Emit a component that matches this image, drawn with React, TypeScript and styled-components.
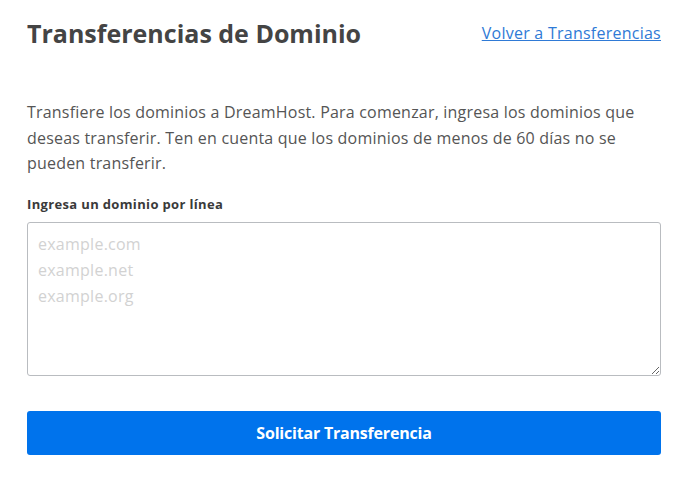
import React from "react";
import styled, { createGlobalStyle } from "styled-components";

const Global = createGlobalStyle`
  html, body { margin: 0; padding: 0; background: #fff; }
  body { font-family: "Open Sans", "Liberation Sans", sans-serif; }
  * { box-sizing: border-box; }
`;

const Page = styled.div`
  padding: 15px 22px 0 27px;
  display: flex;
  flex-direction: column;
`;

const Header = styled.div`
  display: flex;
  justify-content: space-between;
  align-items: center;
  height: 36px;
`;

const Title = styled.h1`
  margin: 0;
  font-family: "Open Sans", "Noto Sans", sans-serif;
  font-weight: 700;
  font-size: 25px;
  color: #444;
`;

const BackLink = styled.a`
  font-size: 16px;
  letter-spacing: 0.25px;
  color: #2f7ad6;
  text-decoration: underline;
  cursor: pointer;
`;

const Intro = styled.p`
  margin: 49px 0 0 0;
  font-size: 16px;
  letter-spacing: 0.2px;
  line-height: 25.5px;
  color: #555;
`;

const Label = styled.label`
  display: block;
  margin-top: 18px;
  font-size: 13px;
  font-weight: 700;
  letter-spacing: 0.35px;
  color: #3a3a3a;
`;

const Area = styled.textarea`
  display: block;
  width: 100%;
  height: 154px;
  margin-top: 9px;
  padding: 8px 10px;
  border: 1px solid #b9bcc0;
  border-radius: 3px;
  font-family: "Open Sans", "Liberation Sans", sans-serif;
  font-size: 16px;
  letter-spacing: 0.25px;
  line-height: 26px;
  color: #333;
  resize: vertical;
  &::placeholder { color: #d2d2d2; }
`;

const Submit = styled.button`
  margin-top: 35px;
  height: 44px;
  width: 100%;
  border: none;
  border-radius: 3px;
  background: #0073ec;
  color: #fff;
  font-family: "Open Sans", "Liberation Sans", sans-serif;
  font-weight: 700;
  font-size: 16px;
  letter-spacing: -0.2px;
  cursor: pointer;
`;

export default function App() {
  return (
    <>
      <Global />
      <Page>
        <Header>
          <Title>Transferencias de Dominio</Title>
          <BackLink>Volver a Transferencias</BackLink>
        </Header>
        <Intro>
          Transfiere los dominios a DreamHost. Para comenzar, ingresa los dominios que
          deseas transferir. Ten en cuenta que los dominios de menos de 60 días no se
          pueden transferir.
        </Intro>
        <Label>Ingresa un dominio por línea</Label>
        <Area placeholder={"example.com\nexample.net\nexample.org"} />
        <Submit>Solicitar Transferencia</Submit>
      </Page>
    </>
  );
}
